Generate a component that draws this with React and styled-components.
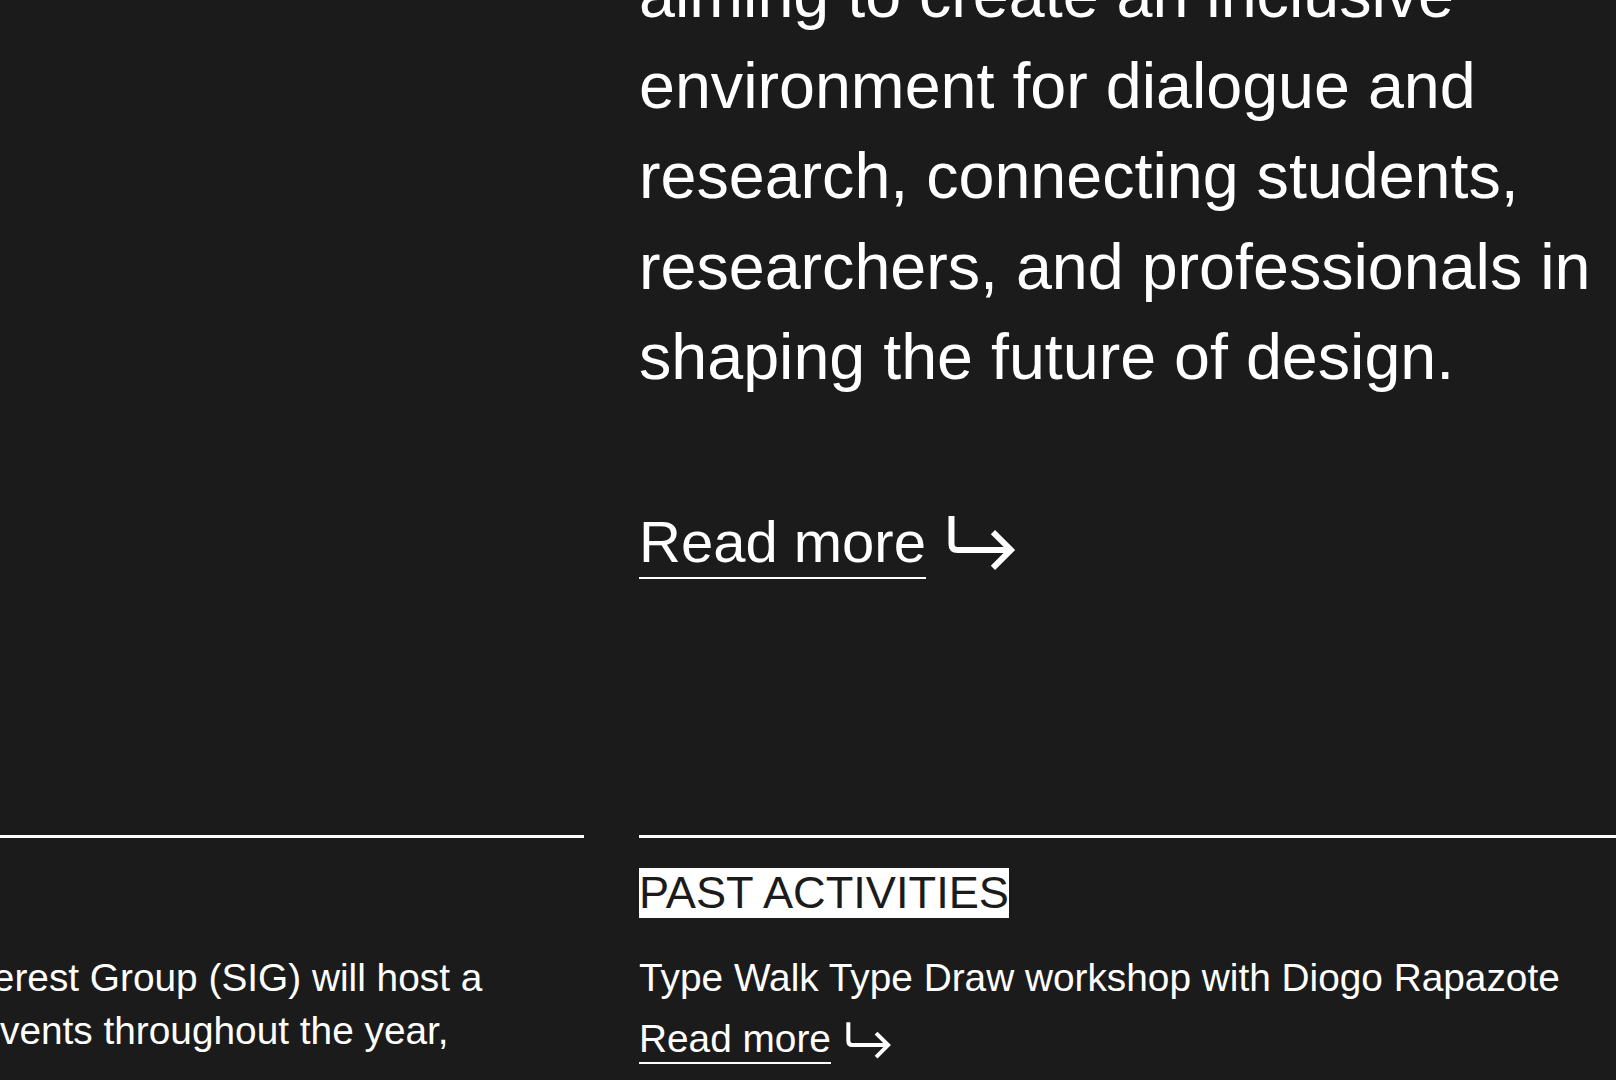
import React from 'react'
import styled, { createGlobalStyle } from 'styled-components'

const GlobalStyle = createGlobalStyle`
  html, body {
    margin: 0;
    padding: 0;
    overflow: hidden;
    background: #1b1b1b;
  }
  body {
    font-family: 'Liberation Sans', Arial, Helvetica, sans-serif;
    color: #fff;
  }
`

const ReadMore = ({ size, gap }) => (
  <MoreLink href='#' $size={size} $gap={gap}>
    <MoreText>Read more</MoreText>
    <ArrowIcon viewBox='0 0 72 58' fill='none' stroke='currentColor' strokeWidth='6'>
      <path d='M6.5 2 V30 Q6.5 36 12.5 36 H64' />
      <path d='M48 18 L66 36 L48 54' strokeLinejoin='miter' />
    </ArrowIcon>
  </MoreLink>
)

const App = () => (
  <>
    <GlobalStyle />
    <Page>
      <div />
      <Intro>
        <Lead>
          aiming to create an inclusive environment for dialogue and research,
          connecting students, researchers, and professionals in shaping the
          future of design.
        </Lead>
        <ReadMore size={58} gap={110} />
      </Intro>

      <Section>
        {/* no label in this column, keep the text on the same line as the right one */}
        <Body $top={84.4}>
          A Type Interest Group (SIG) will host a series of events throughout
          the year,
        </Body>
      </Section>

      <Section>
        <Label>Past activities</Label>
        <Body>Type Walk Type Draw workshop with Diogo Rapazote</Body>
        <ReadMore size={38.8} gap={15.3} />
      </Section>
    </Page>
  </>
)

export default App

const Page = styled.main`
  display: grid;
  grid-template-columns: 763px 977px;
  column-gap: 55px;
  row-gap: 256px;
  margin-left: -179px;
  margin-top: -49.6px;
`

const Intro = styled.div`
  display: flex;
  flex-direction: column;
  align-items: flex-start;
`

const Lead = styled.p`
  margin: 0;
  font-size: 64.6px;
  line-height: 90.5px;
  font-weight: 400;
`

const MoreLink = styled.a`
  display: flex;
  align-items: flex-start;
  width: max-content;
  margin-top: ${p => p.$gap}px;
  font-size: ${p => p.$size}px;
  color: #fff;
  text-decoration: none;
`

const MoreText = styled.span`
  display: block;
  line-height: 1;
  padding-bottom: 0.1em;
  border-bottom: 2px solid #fff;
`

const ArrowIcon = styled.svg`
  flex: none;
  width: 1.24em;
  height: 1em;
  margin-left: 0.33em;
  margin-top: 0.02em;
`

const Section = styled.section`
  display: flex;
  flex-direction: column;
  align-items: flex-start;
  border-top: 3px solid #fff;
  padding-top: 30px;
`

const Label = styled.h2`
  margin: 0;
  width: fit-content;
  font-size: 45.2px;
  line-height: 50px;
  font-weight: 400;
  text-transform: uppercase;
  background: #fff;
  color: #1b1b1b;
`

const Body = styled.p`
  align-self: stretch;
  margin: ${p => p.$top || 34.4}px 0 0;
  font-size: 38.8px;
  line-height: 52.4px;
`
